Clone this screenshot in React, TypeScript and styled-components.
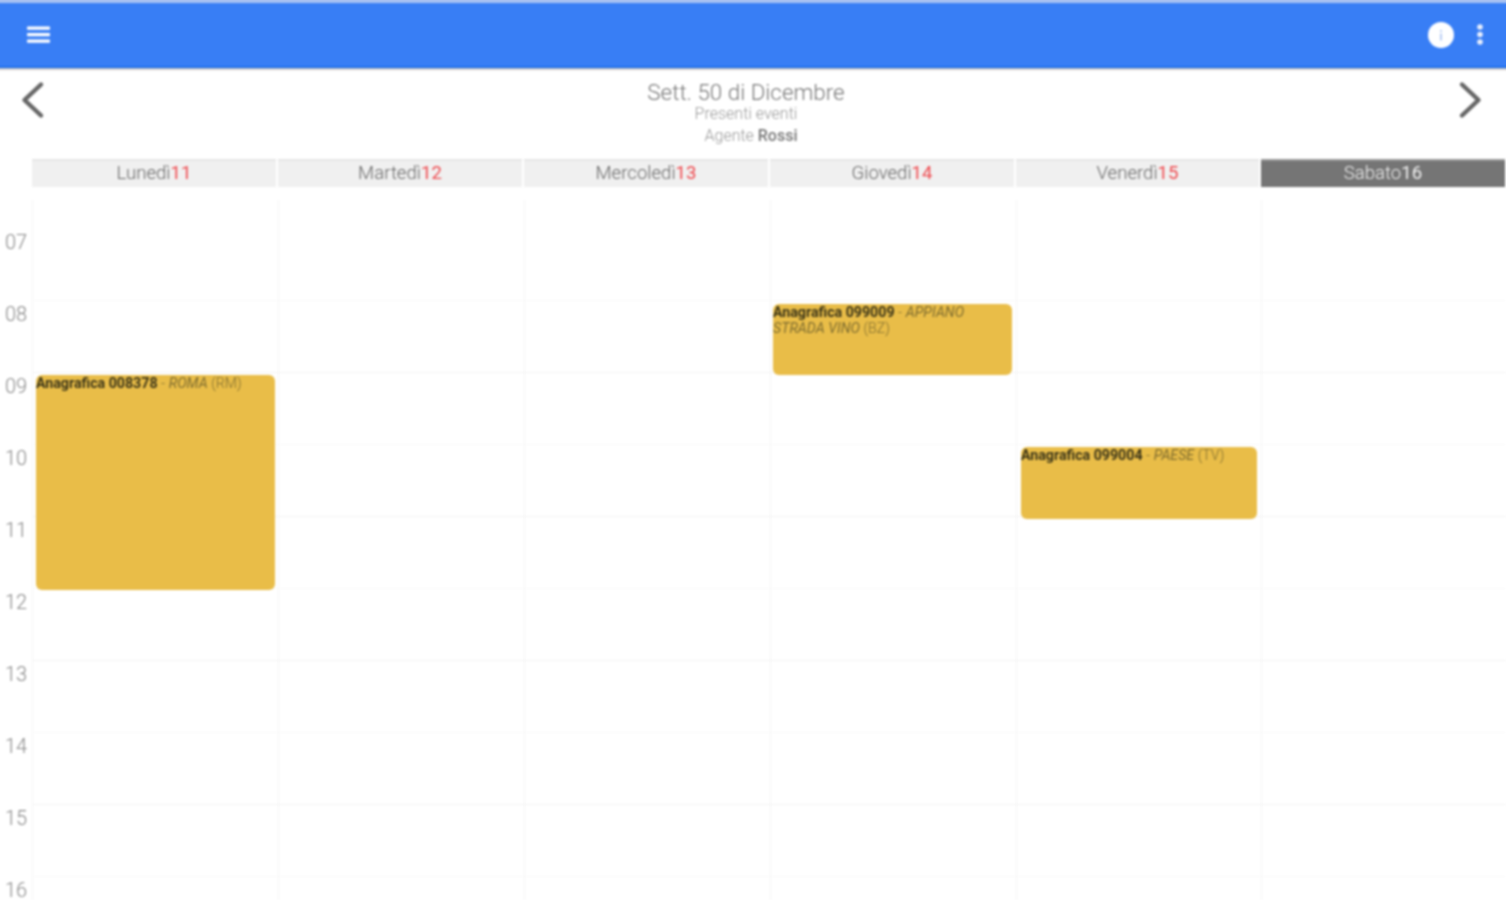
import React from "react";
import styled, { createGlobalStyle } from "styled-components";

const Global = createGlobalStyle`
  html, body { margin: 0; padding: 0; height: 900px; overflow: hidden; background: #fff; }
  body { font-family: Roboto, "Liberation Sans", sans-serif; }
`;

const Page = styled.div`
  width: 1506px;
  height: 900px;
  display: flex;
  flex-direction: column;
  filter: blur(0.8px);
`;

const Toolbar = styled.header`
  height: 68px;
  flex: none;
  box-sizing: border-box;
  margin: 0 -6px;
  background: #387ef5;
  border-top: 3px solid #a9c3f3;
  border-bottom: 2px solid #1f72f0;
  box-shadow: 0 1px 2px rgba(90, 80, 80, 0.6), 0 -6px 0 #a9c3f3;
  display: flex;
  align-items: center;
  justify-content: space-between;
  padding: 0 28px 0 33px;
`;

const ToolbarActions = styled.div`
  display: flex;
  align-items: center;
  gap: 22px;
`;

const WeekNav = styled.div`
  height: 91px;
  flex: none;
  display: flex;
  justify-content: space-between;
  padding: 13px 24px 0 21px;
  box-sizing: border-box;
`;

const NavButton = styled.svg`
  width: 24px;
  height: 38px;
  fill: none;
  stroke: #666;
  stroke-width: 4.4;
  stroke-linecap: round;
  stroke-linejoin: round;
`;

const WeekInfo = styled.div`
  display: flex;
  flex-direction: column;
  align-items: center;
  margin-left: -11px;
`;

const WeekTitle = styled.div`
  font-size: 22.4px;
  font-weight: 300;
  line-height: 22px;
  color: #777;
`;

const WeekSub = styled.div`
  font-size: 16px;
  font-weight: 300;
  line-height: 22px;
  color: #999;
`;

const AgentLine = styled(WeekSub)`
  margin-left: 10px;
  strong { font-weight: 500; color: #777; }
`;

const DayHeader = styled.div`
  height: 28px;
  flex: none;
  display: grid;
  grid-template-columns: 31px repeat(4, 246px) 245px 1fr;
`;

const DayLabel = styled.div<{ $active?: boolean }>`
  display: flex;
  align-items: center;
  justify-content: center;
  font-size: 18.6px;
  font-weight: 300;
  margin: 0 1px;
  padding-bottom: 2px;
  border-top: 2px solid ${(p) => (p.$active ? "#999" : "#e6e6e6")};
  background: ${(p) => (p.$active ? "#757575" : "#f0f0f0")};
  color: ${(p) => (p.$active ? "#f0f0f0" : "#666")};
  box-sizing: border-box;
`;

const DayNumber = styled.span<{ $active?: boolean }>`
  color: ${(p) => (p.$active ? "#f0f0f0" : "#ef4b50")};
  font-weight: 400;
`;

const Calendar = styled.div`
  flex: 1;
  margin-top: 13px;
  display: grid;
  grid-template-columns: 32px repeat(4, 246px) 245px 1fr;
  overflow: hidden;
`;

const HourColumn = styled.div`
  padding-top: 29px;
`;

const HourLabel = styled.div`
  height: 72px;
  font-size: 20px;
  font-weight: 300;
  line-height: 26px;
  color: #888;
  padding-left: 5px;
  box-sizing: border-box;
`;

const DayColumn = styled.div`
  position: relative;
  border-left: 1px solid #f5f5f5;
  padding-top: 29px;
`;

const HourCell = styled.div<{ $strong?: boolean }>`
  height: 72px;
  box-sizing: border-box;
  border-bottom: 1px solid ${(p) => (p.$strong ? "#f3f3f3" : "#fafafa")};
`;

const EventCard = styled.div<{ $top: number; $height: number; $left: number; $right: number }>`
  position: absolute;
  top: ${(p) => p.$top}px;
  left: ${(p) => p.$left}px;
  right: ${(p) => p.$right}px;
  height: ${(p) => p.$height}px;
  background: #e9bd48;
  border-radius: 6px;
  font-size: 14.2px;
  line-height: 16px;
  color: #7f6d30;
  overflow: hidden;
  strong { font-weight: 700; color: #3a3418; }
  em { font-style: italic; font-weight: 400; }
  span { font-weight: 300; }
`;

const hours = ["07", "08", "09", "10", "11", "12", "13", "14", "15", "16"];
const strongLines = [1, 3, 5, 7];

type Ev = { top: number; height: number; left: number; right: number; code: string; place: string; prov: string };

const days: { name: string; num: string; active?: boolean; events: Ev[] }[] = [
  { name: "Lunedì", num: "11", events: [{ top: 175, height: 215, left: 3, right: 3, code: "Anagrafica 008378", place: "ROMA", prov: "(RM)" }] },
  { name: "Martedì", num: "12", events: [] },
  { name: "Mercoledì", num: "13", events: [] },
  { name: "Giovedì", num: "14", events: [{ top: 104, height: 71, left: 2, right: 4, code: "Anagrafica 099009", place: "APPIANO STRADA VINO", prov: "(BZ)" }] },
  { name: "Venerdì", num: "15", events: [{ top: 247, height: 72, left: 4, right: 4, code: "Anagrafica 099004", place: "PAESE", prov: "(TV)" }] },
  { name: "Sabato", num: "16", active: true, events: [] },
];

export default function App() {
  return (
    <Page>
      <Global />
      <Toolbar>
        <svg width="24" height="18" viewBox="0 0 24 18" fill="#fff">
          <rect x="0" y="0.5" width="23" height="3.2" rx="0.8" />
          <rect x="0" y="7" width="23" height="3.2" rx="0.8" />
          <rect x="0" y="13.5" width="23" height="3.2" rx="0.8" />
        </svg>
        <ToolbarActions>
          <svg width="26" height="26" viewBox="0 0 26 26">
            <circle cx="13" cy="13" r="13" fill="#fff" />
            <rect x="12.2" y="11.5" width="1.6" height="7" fill="#a9c3f3" />
            <rect x="12.2" y="8" width="1.6" height="1.8" fill="#a9c3f3" />
          </svg>
          <svg width="8" height="23" viewBox="0 0 8 23" fill="#e8effd">
            <circle cx="4" cy="4" r="2.8" />
            <circle cx="4" cy="11.5" r="2.8" />
            <circle cx="4" cy="19" r="2.8" />
          </svg>
        </ToolbarActions>
      </Toolbar>
      <WeekNav>
        <NavButton viewBox="0 0 24 38">
          <polyline points="20,3.5 3.5,19 20,34.5" />
        </NavButton>
        <WeekInfo>
          <WeekTitle>Sett. 50 di Dicembre</WeekTitle>
          <WeekSub>Presenti eventi</WeekSub>
          <AgentLine>
            Agente <strong>Rossi</strong>
          </AgentLine>
        </WeekInfo>
        <NavButton viewBox="0 0 24 38">
          <polyline points="4,3.5 20.5,19 4,34.5" />
        </NavButton>
      </WeekNav>
      <DayHeader>
        <div />
        {days.map((d) => (
          <DayLabel key={d.name} $active={d.active}>
            {d.name}
            <DayNumber $active={d.active}>{d.num}</DayNumber>
          </DayLabel>
        ))}
      </DayHeader>
      <Calendar>
        <HourColumn>
          {hours.map((h) => (
            <HourLabel key={h}>{h}</HourLabel>
          ))}
        </HourColumn>
        {days.map((d) => (
          <DayColumn key={d.name}>
            {hours.map((h, i) => (
              <HourCell key={h} $strong={strongLines.includes(i)} />
            ))}
            {d.events.map((e) => (
              <EventCard key={e.code} $top={e.top} $height={e.height} $left={e.left} $right={e.right}>
                <strong>{e.code}</strong> <span>-</span> <em>{e.place}</em> <span>{e.prov}</span>
              </EventCard>
            ))}
          </DayColumn>
        ))}
      </Calendar>
    </Page>
  );
}
